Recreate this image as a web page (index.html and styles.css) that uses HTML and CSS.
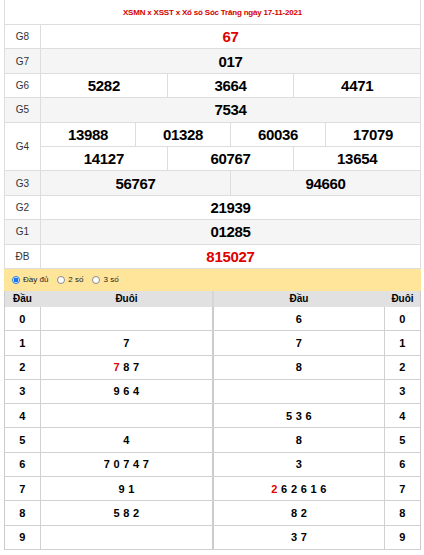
FILE: index.html
```html
<!DOCTYPE html>
<html lang="vi">
<head>
<meta charset="utf-8">
<title>XSST</title>
<link rel="stylesheet" href="styles.css">
</head>
<body>
<div class="page">
  <div class="results">
    <div class="title">XSMN x XSST x Xổ số Sóc Trăng ngày 17-11-2021</div>
    <div class="row"><div class="label">G8</div><div class="cells"><div class="cell red">67</div></div></div>
    <div class="row alt"><div class="label">G7</div><div class="cells"><div class="cell">017</div></div></div>
    <div class="row"><div class="label">G6</div><div class="cells"><div class="cell">5282</div><div class="cell">3664</div><div class="cell">4471</div></div></div>
    <div class="row alt"><div class="label">G5</div><div class="cells"><div class="cell">7534</div></div></div>
    <div class="row double"><div class="label">G4</div>
      <div class="stack">
        <div class="cells sub"><div class="cell">13988</div><div class="cell">01328</div><div class="cell">60036</div><div class="cell">17079</div></div>
        <div class="cells"><div class="cell">14127</div><div class="cell">60767</div><div class="cell">13654</div></div>
      </div>
    </div>
    <div class="row alt"><div class="label">G3</div><div class="cells"><div class="cell">56767</div><div class="cell">94660</div></div></div>
    <div class="row"><div class="label">G2</div><div class="cells"><div class="cell">21939</div></div></div>
    <div class="row alt"><div class="label">G1</div><div class="cells"><div class="cell">01285</div></div></div>
    <div class="row"><div class="label">ĐB</div><div class="cells"><div class="cell red">815027</div></div></div>
  </div>

  <div class="filter">
    <label class="opt"><span class="radio checked"></span>Đầy đủ</label>
    <label class="opt"><span class="radio"></span>2 số</label>
    <label class="opt"><span class="radio"></span>3 số</label>
  </div>

  <div class="loto">
    <div class="lrow head"><div class="c1">Đầu</div><div class="c2">Đuôi</div><div class="c3">Đầu</div><div class="c4">Đuôi</div></div>
    <div class="lrow"><div class="c1">0</div><div class="c2"></div><div class="c3">6</div><div class="c4">0</div></div>
    <div class="lrow"><div class="c1">1</div><div class="c2">7</div><div class="c3">7</div><div class="c4">1</div></div>
    <div class="lrow"><div class="c1">2</div><div class="c2"><span class="red">7</span> 8 7</div><div class="c3">8</div><div class="c4">2</div></div>
    <div class="lrow"><div class="c1">3</div><div class="c2">9 6 4</div><div class="c3"></div><div class="c4">3</div></div>
    <div class="lrow"><div class="c1">4</div><div class="c2"></div><div class="c3">5 3 6</div><div class="c4">4</div></div>
    <div class="lrow"><div class="c1">5</div><div class="c2">4</div><div class="c3">8</div><div class="c4">5</div></div>
    <div class="lrow"><div class="c1">6</div><div class="c2">7 0 7 4 7</div><div class="c3">3</div><div class="c4">6</div></div>
    <div class="lrow"><div class="c1">7</div><div class="c2">9 1</div><div class="c3"><span class="red">2</span> 6 2 6 1 6</div><div class="c4">7</div></div>
    <div class="lrow"><div class="c1">8</div><div class="c2">5 8 2</div><div class="c3">8 2</div><div class="c4">8</div></div>
    <div class="lrow"><div class="c1">9</div><div class="c2"></div><div class="c3">3 7</div><div class="c4">9</div></div>
  </div>
</div>
</body>
</html>
```

FILE: styles.css
```css
* { box-sizing: border-box; }
html, body { margin: 0; padding: 0; background: #fff; }
body { font-family: "Liberation Sans", Arial, sans-serif; color: #000; }

.page { width: 417px; margin-left: 4px; }

.results { border-left: 1px solid #ddd; border-right: 1px solid #ddd; }

.title {
  height: 25px;
  border-bottom: 1px solid #ddd;
  display: flex; align-items: center; justify-content: center;
  color: #d40000; font-weight: bold; font-size: 8px; letter-spacing: -0.2px;
}

.row { display: flex; height: 24.4px; border-bottom: 1px solid #ddd; background: #fff; }
.row.alt { background: #f5f5f5; }
.row.double { height: 48.8px; }

.label {
  width: 36px; flex: none;
  border-right: 1px solid #ddd;
  display: flex; align-items: center; justify-content: center;
  font-size: 10px; color: #333;
}

.stack { flex: 1; display: flex; flex-direction: column; }
.stack .cells { flex: 1; }
.cells.sub { border-bottom: 1px solid #ddd; }

.cells { flex: 1; display: flex; }
.cell {
  flex: 1;
  display: flex; align-items: center; justify-content: center;
  font-weight: bold; font-size: 15px; letter-spacing: -0.3px;
}
.cell + .cell { border-left: 1px solid #ddd; }

.red { color: #e00000; }

.filter {
  height: 22px;
  background: #ffe59a;
  display: flex; align-items: center;
  padding-left: 8px; gap: 9px;
  font-size: 8px; color: #222;
}
.opt { display: inline-flex; align-items: center; gap: 3px; }
.radio {
  width: 8px; height: 8px; border-radius: 50%;
  border: 1px solid #8a8a8a; background: #fff;
}
.radio.checked {
  border-color: #1a73e8;
  background: radial-gradient(circle, #1a73e8 0 2.2px, #fff 2.6px);
}

.loto { border-left: 1px solid #ccc; border-right: 1px solid #ccc; }
.lrow { display: flex; height: 24.3px; border-bottom: 1px solid #d0d0d0; }
.lrow > div {
  display: flex; align-items: center; justify-content: center;
  font-weight: bold; font-size: 11px; letter-spacing: 0.3px; white-space: pre;
}
.c1 { width: 36px; border-right: 1px solid #d0d0d0; }
.c2 { width: 173px; border-right: 2px solid #ccc; }
.c3 { width: 171px; border-right: 1px solid #d0d0d0; }
.c4 { width: 35px; }

.lrow.head { height: 16px; background: #e1e1e1; border-bottom: none; }
.lrow.head > div { font-size: 10px; letter-spacing: 0; border-right-color: transparent; }
.lrow.head .c2 { border-right: 2px solid #d6d6d6; }
```
